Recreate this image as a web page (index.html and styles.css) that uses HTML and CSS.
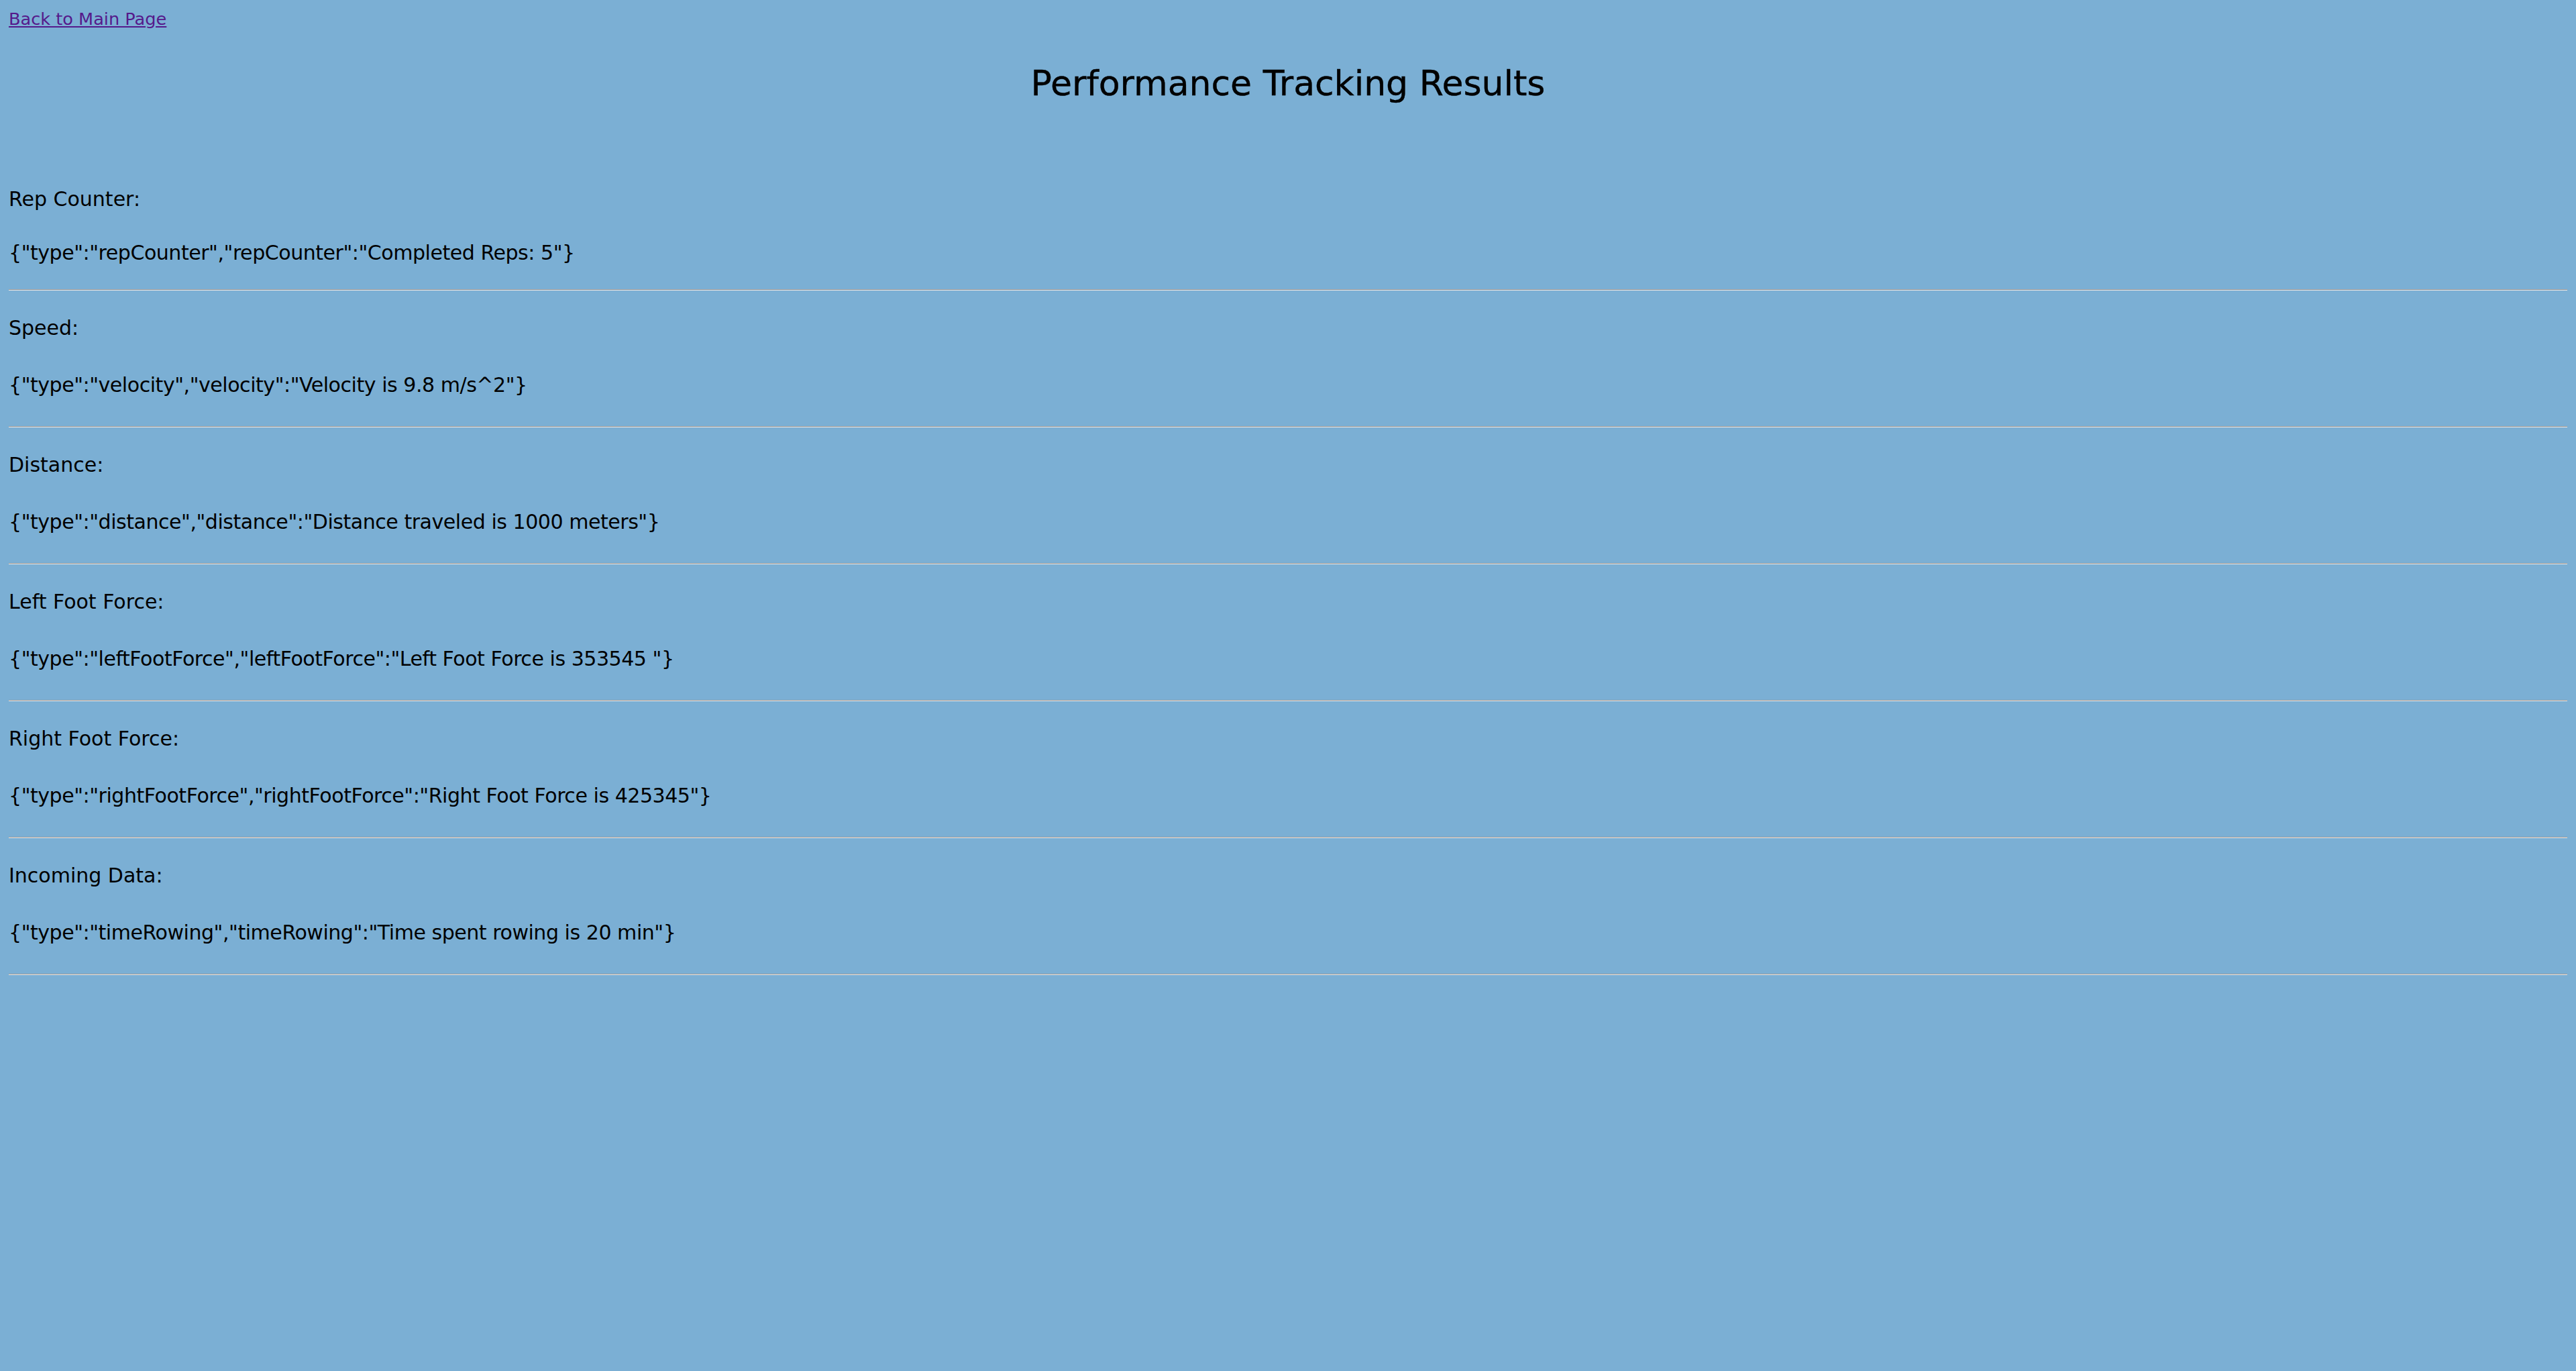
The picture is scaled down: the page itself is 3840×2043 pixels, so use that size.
FILE: index.html
```html
<!DOCTYPE html>
<html lang="en">
<head>
<meta charset="utf-8">
<title>Performance Tracking Results</title>
<link rel="stylesheet" href="styles.css">
</head>
<body>
<a class="back-link" href="#">Back to Main Page</a>
<h1 class="title">Performance Tracking Results</h1>
<div class="results">
  <div class="entry entry-first">
    <p class="label">Rep Counter:</p>
    <p class="value">{"type":"repCounter","repCounter":"Completed Reps: 5"}</p>
  </div>
  <hr class="divider">
  <div class="entry">
    <p class="label">Speed:</p>
    <p class="value">{"type":"velocity","velocity":"Velocity is 9.8 m/s^2"}</p>
  </div>
  <hr class="divider">
  <div class="entry">
    <p class="label">Distance:</p>
    <p class="value">{"type":"distance","distance":"Distance traveled is 1000 meters"}</p>
  </div>
  <hr class="divider">
  <div class="entry">
    <p class="label">Left Foot Force:</p>
    <p class="value">{"type":"leftFootForce","leftFootForce":"Left Foot Force is 353545 "}</p>
  </div>
  <hr class="divider">
  <div class="entry">
    <p class="label">Right Foot Force:</p>
    <p class="value">{"type":"rightFootForce","rightFootForce":"Right Foot Force is 425345"}</p>
  </div>
  <hr class="divider">
  <div class="entry">
    <p class="label">Incoming Data:</p>
    <p class="value">{"type":"timeRowing","timeRowing":"Time spent rowing is 20 min"}</p>
  </div>
  <hr class="divider">
</div>
</body>
</html>
```
FILE: styles.css
```css
html {
  background: #7bafd4;
}
body {
  margin: 13px;
  background: #7bafd4;
  color: #000;
  font-family: "DejaVu Sans", "Liberation Sans", sans-serif;
}
.back-link {
  display: block;
  width: max-content;
  font-size: 25.6px;
  line-height: 30px;
  color: #551a8b;
  text-decoration: underline;
}
.title {
  margin: 51px 0 125px;
  font-size: 52px;
  font-weight: normal;
  line-height: 60px;
  text-align: center;
  -webkit-text-stroke: 0.4px #000;
}
.results {
  display: block;
}
.entry {
  padding-bottom: 44px;
}
.entry-first {
  padding-bottom: 37px;
}
.label,
.value {
  margin: 0;
  font-size: 30px;
  line-height: 35px;
}
.value {
  margin-top: 50px;
  letter-spacing: -0.45px;
}
.entry-first .value {
  margin-top: 45px;
}
.divider {
  height: 0;
  margin: 0 0 38px;
  border: 0;
  border-top: 1px solid #9c9c9c;
  border-bottom: 1px solid #e6e6e6;
}
```
